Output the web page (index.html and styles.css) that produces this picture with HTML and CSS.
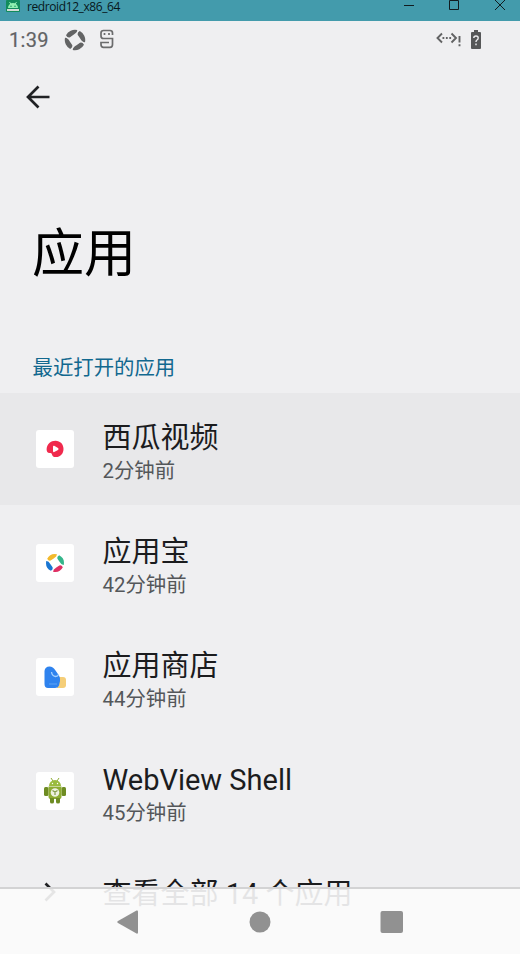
FILE: index.html
```html
<!DOCTYPE html>
<html lang="zh-CN">
<head>
    <meta charset="UTF-8">
    <meta name="viewport" content="width=device-width, initial-scale=1.0">
    <title>redroid12_x86_64</title>
    <link rel="stylesheet" href="styles.css">
</head>
<body>
    <!-- Window title bar -->
    <div class="titlebar">
        <svg class="titlebar-icon" width="14" height="12" viewBox="0 0 14 12">
            <rect width="14" height="12" rx="1" fill="#128c5c"/>
            <path d="M2 8a5 5 0 0 1 10 0z" fill="#8ff0b0"/>
            <path d="M3.5 2l1.3 2M10.5 2L9.2 4" stroke="#8ff0b0"/>
            <circle cx="5" cy="6.2" r=".7" fill="#128c5c"/>
            <circle cx="9" cy="6.2" r=".7" fill="#128c5c"/>
            <path d="M1 9h12v2H1z" fill="#d4ddd8"/>
        </svg>
        <span class="titlebar-text">redroid12_x86_64</span>
        <svg class="window-buttons" width="112" height="21" viewBox="0 0 112 21" fill="none" stroke="#111c20">
            <path d="M4 5.5h10M49.500 .5h9v9h-9zM95 0l10 10M105 0L95 10"/>
        </svg>
    </div>

    <!-- Android status bar -->
    <div class="statusbar">
        <span class="clock">1:39</span>
        <svg class="status-swirl" width="22" height="22" viewBox="-11 -11 22 22" fill="#636465">
            <path id="blade" d="M-9 -4.800A10.200 10.200 0 0 1 2.200 -10Q2.500 -7.500 -1.500 -5.200L-5 -2.800Q-7.500 -2 -9 -4.800z"/>
            <use href="#blade" transform="rotate(90)"/>
            <use href="#blade" transform="rotate(180)"/>
            <use href="#blade" transform="rotate(270)"/>
        </svg>
        <svg class="status-s" width="16" height="20" viewBox="0 0 16 20" fill="none" stroke="#6b6c6d" stroke-width="1.700">
            <path d="M13.500 6V4Q13.500 1.500 11 1.500H4.500Q2 1.500 2 4V7Q2 9.500 4.500 9.500H13.500V15.500Q13.500 18.300 11 18.300H4.500Q2 18.300 2 15.500V13.500H10"/>
            <path d="M5.500 4v2M10 4v2"/>
        </svg>
        <div class="status-right">
            <svg width="26" height="18" viewBox="0 0 26 18" fill="none" stroke="#626364" stroke-width="1.900">
                <path d="M6 3.500L1.500 8 6 12.500M15.500 3.500L20 8l-4.500 4.500"/>
                <path d="M6.500 8h9" stroke-dasharray="1.800 1.600"/>
                <path d="M23.500 6v6.500M23.500 14.200v2"/>
            </svg>
            <svg class="battery" width="10" height="19" viewBox="0 0 10 19">
                <path d="M3 0h4v2h2q1 0 1 1v15q0 1-1 1H1q-1 0-1-1V3q0-1 1-1h2z" fill="#565758"/>
                <path d="M2.800 8Q2.800 6 5 6T7.200 8Q7.200 9.200 6 10Q5 10.700 5 12M5 13.500v1.700" fill="none" stroke="#eeeef0" stroke-width="1.400"/>
            </svg>
        </div>
    </div>

    <div class="toolbar">
        <svg width="24" height="24" viewBox="0 0 24 24" fill="none" stroke="#202124" stroke-width="2.700">
            <path d="M23.500 12H2.500M12.500 1.500L2 12l10.500 10.500"/>
        </svg>
    </div>

    <h1 class="page-title">应用</h1>
    <h2 class="section-title">最近打开的应用</h2>

    <!-- Recently opened apps -->
    <div class="app-list">
        <div class="app-row active">
            <div class="app-icon">
                <svg width="20" height="20" viewBox="0 0 20 20">
                    <path d="M10.500 1.700c4.800 0 8 3.600 8 8.200 0 4.700-3.300 8.200-7.500 8.200-2.600 0-3.700-1-4-2.600-.2-1.200-1-1.500-2.500-1.500C2.500 14 1.600 12.300 1.600 10.200 1.800 5 5.800 1.700 10.500 1.700z" fill="#f02a4d"/>
                    <path d="M8 7.500q0-1.200 1.200-.7l3.800 2.200q1.300 1 0 2l-3.800 2Q8 13.500 8 12z" fill="#fff"/>
                </svg>
            </div>
            <div class="app-text">
                <div class="app-name">西瓜视频</div>
                <div class="app-time">2分钟前</div>
            </div>
        </div>
        <div class="app-row">
            <div class="app-icon">
                <svg width="20" height="20" viewBox="-11.500 -11.500 23 23">
                    <use href="#blade" fill="#f2b92c"/>
                    <use href="#blade" transform="rotate(90)" fill="#35b68b"/>
                    <use href="#blade" transform="rotate(180)" fill="#df2f63"/>
                    <use href="#blade" transform="rotate(270)" fill="#1976d2"/>
                </svg>
            </div>
            <div class="app-text">
                <div class="app-name">应用宝</div>
                <div class="app-time">42分钟前</div>
            </div>
        </div>
        <div class="app-row">
            <div class="app-icon">
                <svg width="24" height="24" viewBox="0 0 24 24">
                    <path d="M16 12h4q3 0 3 3v5q0 3-3 3h-6z" fill="#f5ce78"/>
                    <path d="M1.500 6Q2 1.500 6.500 1.500 10 1.500 12.500 5.500L16 10.500Q17.500 13 17 16L16 20.500Q15 23 12 23H5Q1.500 23 1.500 19z" fill="#2f83ee"/>
                    <path d="M8.500 7q.5 4 4 4.500 2.500 0 3-2" fill="none" stroke="#a7d2ff" stroke-width="1.300"/>
                    <path d="M6 19h8" stroke="#5ea4f5"/>
                </svg>
            </div>
            <div class="app-text">
                <div class="app-name">应用商店</div>
                <div class="app-time">44分钟前</div>
            </div>
        </div>
        <div class="app-row">
            <div class="app-icon">
                <svg width="24" height="28" viewBox="0 0 24 28" fill="#8dac32">
                    <path d="M6 9a6 6 0 0 1 12 0z" fill="#9abb3d"/>
                    <path d="M8 1l2 3M16 1l-2 3" stroke="#8dac32"/>
                    <rect x="1" y="10" width="4.500" height="9" rx="1.500" fill="#6e8c23"/>
                    <rect x="18.500" y="10" width="4.500" height="9" rx="1.500" fill="#6e8c23"/>
                    <path d="M5.500 9.500h13V20q0 2-2 2h-9q-2 0-2-2z"/>
                    <path d="M7 21h4v4q0 1.500-2 1.500T7 25zM13 21h4v4q0 1.500-2 1.500T13 25z" fill="#6e8c23"/>
                    <circle cx="12" cy="15.500" r="4.300" fill="#edf1df"/>
                    <path d="M9.500 13.500l2.500 1.500 2.500-1.500M12 15v3" fill="none" stroke="#819b45" stroke-width="1.200"/>
                    <circle cx="9.500" cy="6.500" r=".7" fill="#fff"/>
                    <circle cx="14.500" cy="6.500" r=".7" fill="#fff"/>
                </svg>
            </div>
            <div class="app-text">
                <div class="app-name">WebView Shell</div>
                <div class="app-time">45分钟前</div>
            </div>
        </div>
        <div class="app-row see-all">
            <svg class="chevron" width="12" height="20" viewBox="0 0 12 20" fill="none" stroke="#202124" stroke-width="2.700">
                <path d="M1.500 1.500L10 10l-8.500 8.500"/>
            </svg>
            <div class="app-name">查看全部 14 个应用</div>
        </div>
    </div>

    <!-- Navigation bar over the list -->
    <div class="navbar">
        <svg width="22" height="24" viewBox="0 0 22 24" fill="#919191">
            <path d="M1 11L19.500 .5Q21 0 21 1.500v21q0 1.500-1.500 1L1 13q-1.500-1 0-2z"/>
        </svg>
        <svg width="22" height="22" viewBox="0 0 22 22" fill="#919191">
            <circle cx="11" cy="11" r="10.500"/>
        </svg>
        <svg width="24" height="24" viewBox="0 0 24 24" fill="#919191">
            <rect x=".5" y="1" width="22.500" height="22" rx="2"/>
        </svg>
    </div>
</body>
</html>
```
FILE: styles.css
```css
* {
    box-sizing: border-box;
}

body {
    margin: 0;
    height: 954px;
    overflow: hidden;
    position: relative;
    background: #efeff1;
    color: #1b1c1e;
    font-family: Roboto, "Noto Sans CJK SC", sans-serif;
}

svg {
    display: block;
    flex-shrink: 0;
}

/* Window title bar */
.titlebar {
    display: flex;
    align-items: flex-start;
    height: 21px;
    padding-left: 6px;
    background: #439bac;
}

.titlebar-text {
    margin-left: 7px;
    font: 12px/13px "Open Sans", sans-serif;
    letter-spacing: -0.4px;
    color: #07171b;
}

.window-buttons {
    margin-left: auto;
    margin-right: 8px;
}

/* Status bar */
.statusbar {
    display: flex;
    align-items: center;
    height: 37px;
    padding: 0 39px 0 9px;
}

.clock {
    width: 40px;
    font-size: 20px;
    letter-spacing: 0.3px;
    color: #626365;
    -webkit-text-stroke: 0.2px #626365;
}

.status-swirl {
    margin-left: 15px;
}

.status-s {
    margin-left: 13px;
    margin-bottom: 2px;
}

.status-right {
    display: flex;
    align-items: center;
    gap: 9px;
    margin-left: auto;
    margin-bottom: 1px;
}

/* Header */
.toolbar {
    height: 78px;
    padding: 27px 26px;
}

.page-title {
    margin: 80px 0 0 32px;
    font-size: 52px;
    font-weight: 400;
    line-height: 78px;
    color: #000;
}

.section-title {
    margin: 59px 0 0 32.5px;
    font-size: 20.4px;
    font-weight: 400;
    line-height: 30px;
    color: #12688f;
}

/* App list */
.app-list {
    margin-top: 10px;
}

.app-row {
    display: flex;
    align-items: center;
    height: 112px;
    margin-bottom: 2px;
    padding-left: 36px;
}

.app-row.active {
    background: #e8e8ea;
}

.app-icon {
    display: flex;
    align-items: center;
    justify-content: center;
    width: 38px;
    height: 38px;
    margin-right: 28.5px;
    border-radius: 3px;
    background: #fff;
}

.app-text {
    padding-top: 7px;
}

.app-name {
    font-size: 29px;
    line-height: 36px;
    white-space: nowrap;
}

.app-time {
    font-size: 20.4px;
    line-height: 30px;
    color: #54575a;
}

.see-all {
    height: 90px;
}

.chevron {
    margin: 0 46.5px 4px 8px;
}

/* Navigation bar */
.navbar {
    position: absolute;
    left: 0;
    right: 0;
    bottom: 0;
    display: flex;
    justify-content: space-between;
    align-items: center;
    height: 67px;
    padding: 0 116px 0 117px;
    border-top: 2px solid #d3d3d4;
    background: rgba(251, 251, 251, 0.9);
}
```
